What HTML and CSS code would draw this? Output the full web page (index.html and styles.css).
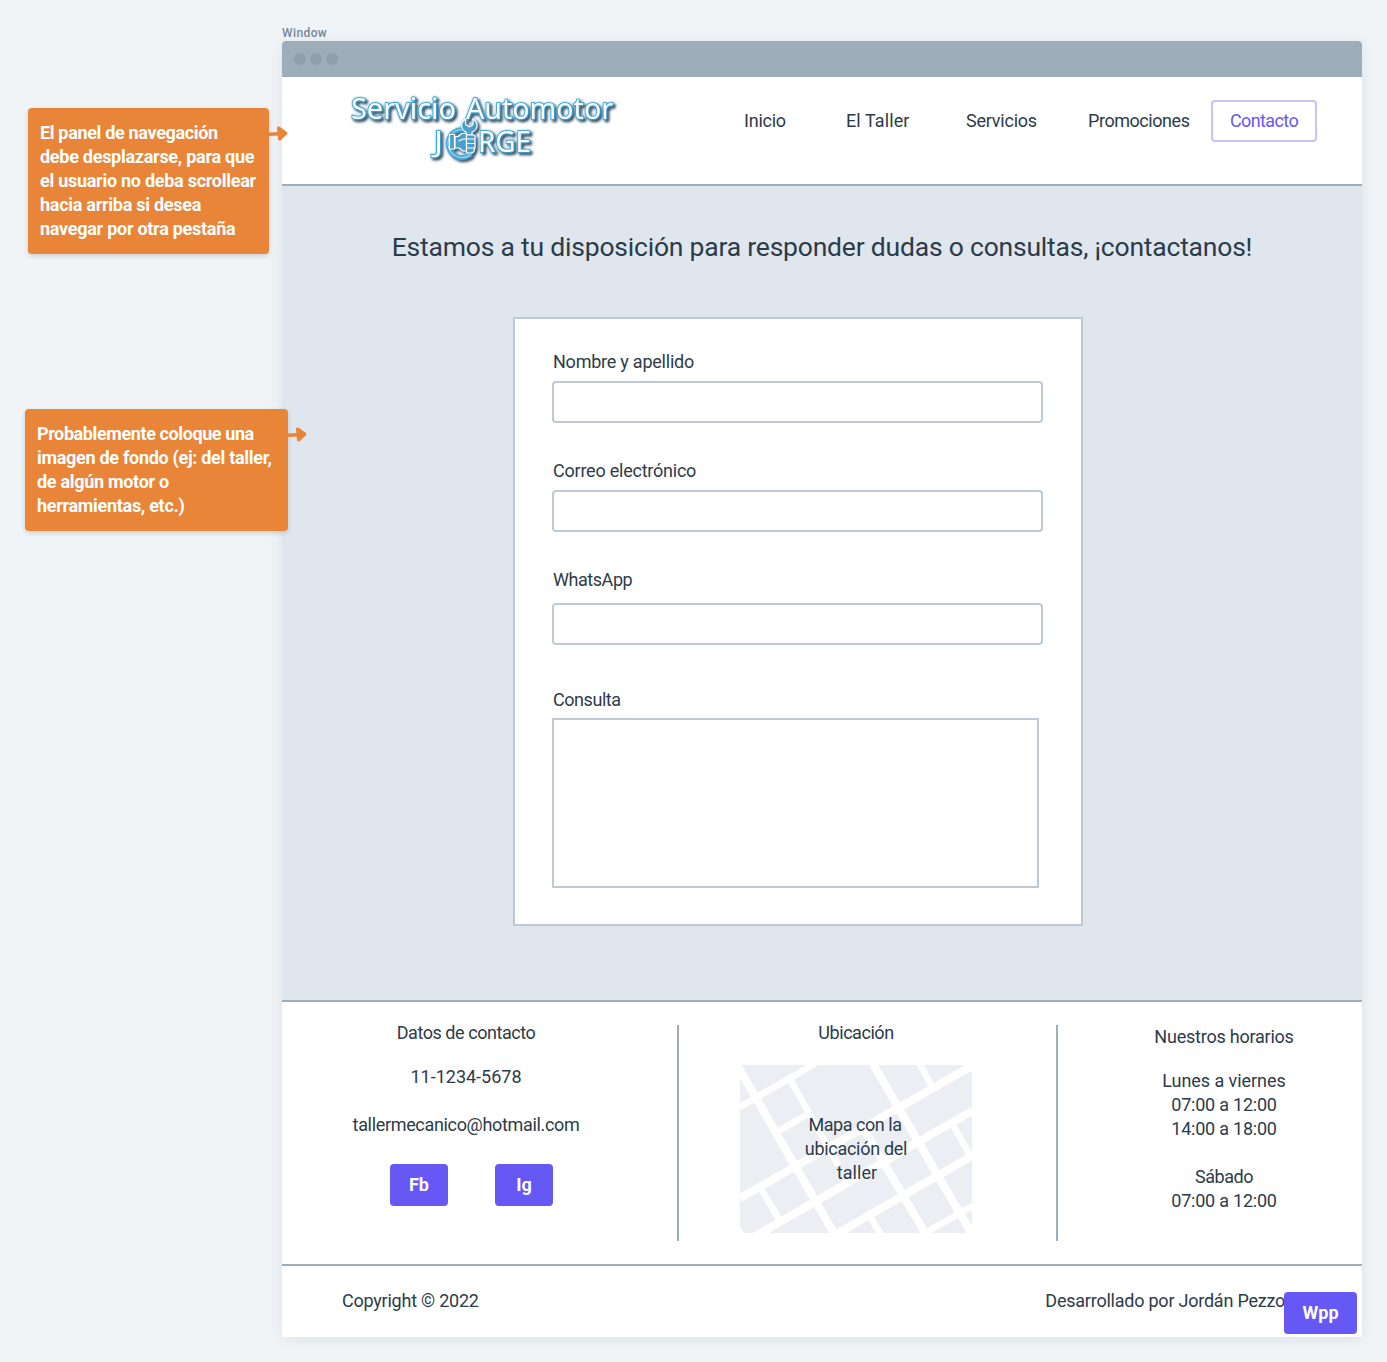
FILE: index.html
```html
<!DOCTYPE html>
<html lang="es">
<head>
<meta charset="utf-8">
<title>Servicio Automotor Jorge - Contacto</title>
<link rel="stylesheet" href="styles.css">
</head>
<body>
<div class="canvas">
  <aside class="note note-nav">
    <p><span class="n1">El panel de navegación</span><br>debe desplazarse, para que<br>el usuario no deba scrollear<br>hacia arriba si desea<br>navegar por otra pestaña</p>
    <svg class="arrow" width="20" height="18" viewBox="0 0 20 18"><path d="M0 9.3 L10 8.7" stroke="#e88539" stroke-width="3.6"/><path d="M9.7 3.2 L16.6 8.2 L10.7 13.8 Z" fill="#e88539" stroke="#e88539" stroke-width="3.4" stroke-linejoin="round"/></svg>
  </aside>
  <aside class="note note-bg">
    <p><span class="n6">Probablemente coloque una</span><br>imagen de fondo (ej: del taller,<br>de algún motor o<br>herramientas, etc.)</p>
    <svg class="arrow" width="20" height="18" viewBox="0 0 20 18"><path d="M0 9.3 L10 8.7" stroke="#e88539" stroke-width="3.6"/><path d="M9.7 3.2 L16.6 8.2 L10.7 13.8 Z" fill="#e88539" stroke="#e88539" stroke-width="3.4" stroke-linejoin="round"/></svg>
  </aside>
  <div class="window-label">Window</div>
  <div class="window">
    <div class="titlebar"><i></i><i></i><i></i></div>
    <header class="header">
      <svg class="logo" width="290" height="85" viewBox="0 0 290 85">
        <g class="logo-text">
          <text x="11" y="34" textLength="105" lengthAdjust="spacingAndGlyphs">Servicio</text>
          <text x="126" y="34" textLength="147" lengthAdjust="spacingAndGlyphs">Automotor</text>
          <text x="94" y="67" textLength="9" lengthAdjust="spacingAndGlyphs">J</text>
          <text x="138" y="67" textLength="53" lengthAdjust="spacingAndGlyphs">RGE</text>
        </g>
        <g class="logo-mark" fill="none" stroke-linejoin="round" stroke-linecap="round">
          <path class="mark-halo" d="M121 44.500 A14 14 0 1 0 130 70"/>
          <path class="mark-ring" d="M121 44.500 A14 14 0 1 0 130 70"/>
          <path class="mark-wrench" d="M125.500 34 C119.500 38 121 45 126 47 V50 H132 V47 C138 45 139 38 133 34 V39.500 L129.500 42 L125.500 39.500 Z"/>
          <path class="mark-hand" d="M115 51.500 H118 L122 48.500 H126.500 V66 H123 L119 63 H115 Z M119 56 L123 54 H126"/>
          <path class="mark-hand" d="M109.500 49.500 H114.500 V64 H109.500 Z M126.500 50 H133 Q135.500 50 135 54 H126.500 Z M126.500 54 H135 V58.500 H126.500 Z M126.500 58.500 H135 V63 H126.500 Z M126.500 63 H134.500 Q134.500 68 131 68 H126.500 Z"/>
        </g>
      </svg>
      <nav class="nav">
        <a class="w1">Inicio</a><a class="w2">El Taller</a><a class="w3">Servicios</a><a class="w4">Promociones</a><a class="active">Contacto</a>
      </nav>
    </header>
    <main class="main">
      <h1>Estamos a tu disposición para responder dudas o consultas, ¡contactanos!</h1>
      <form class="form">
        <label for="nombre">Nombre y apellido</label><input id="nombre">
        <label for="correo">Correo electrónico</label><input id="correo">
        <label class="tight" for="wpp">WhatsApp</label><input id="wpp" class="low">
        <label class="tight" for="consulta">Consulta</label><textarea id="consulta"></textarea>
      </form>
    </main>
    <footer class="footer">
      <section class="col contact">
        <h2 class="tight">Datos de contacto</h2>
        <p class="phone">11-1234-5678</p>
        <p class="mail">tallermecanico@hotmail.com</p>
        <div class="social"><a class="btn">Fb</a><a class="btn">Ig</a></div>
      </section>
      <section class="col place">
        <h2 class="tight">Ubicación</h2>
        <div class="map">
          <svg width="232" height="168" viewBox="0 0 232 168">
            <rect width="232" height="168" fill="#ebeff4"/>
            <g stroke="#fff" fill="none">
              <path stroke-width="8" d="M-3 0 L95 170 M133 -1 L233 171 M125 66 L187 171 M0 133 L232 1 M14 172 L232 46 M95 170 L232 91"/>
              <path stroke-width="6.5" d="M0 42 L76 -2 M50 14 L98 100 M37 67 L66 50 M180 -1 L192 22 M213 60 L232 94 M21 124 L39 154 M131 153 L141 170 M180 171 L234 140"/>
            </g>
            <path fill="#fff" d="M0 161 L4 168 H0 Z M223 0 H232 V7 Z"/>
          </svg>
          <p><span class="m1">Mapa con la</span><br>ubicación del<br><span class="m3">taller</span></p>
        </div>
      </section>
      <section class="col hours">
        <h2>Nuestros horarios</h2>
        <p><span class="day">Lunes a viernes</span><br>07:00 a 12:00<br>14:00 a 18:00<br><br><span class="tight">Sábado</span><br>07:00 a 12:00</p>
      </section>
    </footer>
    <div class="bottom"><span>Copyright © 2022</span><span>Desarrollado por Jordán Pezzo</span></div>
    <a class="btn wpp">Wpp</a>
  </div>
</div>
</body>
</html>
```
FILE: styles.css
```css
* { box-sizing: border-box; margin: 0; padding: 0; }
body { background: #f0f4f7; font: 400 18px/24px Roboto, "Liberation Sans", sans-serif; letter-spacing: -.23px; color: #2c3b49; }
.tight { letter-spacing: -.45px; }
.canvas { position: relative; height: 1362px; padding: 25px 25px 0 282px; overflow: hidden; }
.window-label { height: 16px; font-size: 12px; line-height: 16px; letter-spacing: .4px; font-weight: 500; color: #768a99; }
.window { position: relative; height: 1296px; display: flex; flex-direction: column; background: #fff; border-radius: 4px 4px 0 0; box-shadow: 0 2px 14px rgba(44, 70, 90, .1); }
.titlebar { height: 36px; display: flex; align-items: center; gap: 4px; padding-left: 12px; background: #9eadba; border-radius: 4px 4px 0 0; }
.titlebar i { width: 12px; height: 12px; border-radius: 50%; background: #8f9fac; }
.header { height: 109px; display: flex; justify-content: space-between; border-bottom: 2px solid #9eadba; padding: 8px 45px 0 58px; }
.logo { filter: drop-shadow(0 0 1px #5cc4f5) drop-shadow(2px 2px 1px #34485a); }
.logo-text { font: 29px "Noto Sans", sans-serif; letter-spacing: 0; fill: #fff; stroke: #3a9fd2; stroke-width: 1.6px; paint-order: stroke; }
.mark-halo { stroke: #4aa6d4; stroke-width: 4.5; }
.mark-ring { stroke: #a5daf3; stroke-width: 1.2; }
.mark-wrench { fill: #4a9fca; stroke: #fff; stroke-width: 1.2; }
.mark-hand { fill: #4a9fca; stroke: #fff; stroke-width: 1.2; }
.nav { display: flex; padding-top: 15px; line-height: 42px; }
.nav a { height: 42px; white-space: nowrap; }
.w1 { width: 102px; }
.w2 { width: 120px; letter-spacing: .1px; }
.w3 { width: 122px; }
.w4 { width: 123px; letter-spacing: -.45px; }
.nav .active { width: 106px; line-height: 38px; letter-spacing: -.6px; text-align: center; border: 2px solid #c9c2fd; border-radius: 4px; color: #6658f5; }
.main { height: 816px; background: #dfe6ee; border-bottom: 2px solid #9eadba; display: flex; flex-direction: column; }
h1 { margin-top: 43px; font-size: 26.5px; line-height: 36px; font-weight: 400; letter-spacing: -.21px; text-align: center; white-space: nowrap; }
.form { margin: 52px 0 0 231px; width: 570px; height: 609px; background: #fff; border: 2px solid #bdc9d4; padding: 31px 37px 0; display: flex; flex-direction: column; }
.form label { height: 24px; padding-left: 1px; }
.form input { width: 491px; height: 42px; margin: 7px 0 36px; border: 2px solid #bdc9d4; border-radius: 4px; background: #fff; flex: none; }
.form input.low { margin: 11px 0 43px; }
.form textarea { width: 487px; height: 170px; margin-top: 6px; border: 2px solid #bdc9d4; background: #fff; resize: none; }
.footer { height: 264px; display: flex; border-bottom: 2px solid #9eadba; padding-top: 23px; text-align: center; }
.footer h2 { font: inherit; }
.col { height: 216px; }
.contact { width: 397px; border-right: 2px solid #9eadba; padding-right: 27px; }
.contact h2, .place h2 { margin-top: -4px; }
.phone { margin-top: 20px; letter-spacing: 0; }
.mail { margin-top: 24px; letter-spacing: -.33px; }
.social { display: flex; gap: 47px; margin: 27px 0 0 108px; }
.btn { display: block; width: 58px; height: 42px; line-height: 42px; letter-spacing: 0; border-radius: 4px; background: #6658f5; color: #fff; font-weight: 700; text-align: center; }
.place { width: 379px; border-right: 2px solid #9eadba; padding-right: 23px; }
.map { display: grid; width: 232px; height: 168px; margin: 20px auto 0; place-items: center; }
.map > * { grid-area: 1 / 1; }
.map p { letter-spacing: -.3px; }
.map .m1 { letter-spacing: -.45px; padding-right: 2px; }
.map .m3 { letter-spacing: .1px; padding-left: 2px; }
.hours { width: 304px; padding-left: 28px; }
.hours p { margin-top: 20px; }
.day { letter-spacing: -.05px; }
.bottom { flex: 1; display: flex; justify-content: space-between; padding: 23px 77px 0 60px; }
.wpp { position: absolute; right: 5px; bottom: 3px; width: 73px; }
.note { position: absolute; z-index: 2; background: #e88539; color: #fff; font-weight: 700; letter-spacing: -.27px; border-radius: 4px; padding: 13px 12px 0; white-space: nowrap; box-shadow: 0 2px 5px rgba(44, 70, 90, .2); }
.n1 { letter-spacing: -.33px; }
.n6 { letter-spacing: -.4px; }
.note-nav { left: 28px; top: 108px; width: 241px; height: 146px; }
.note-bg { left: 25px; top: 409px; width: 263px; height: 122px; letter-spacing: -.3px; }
.arrow { position: absolute; left: 100%; top: 17px; }
```
